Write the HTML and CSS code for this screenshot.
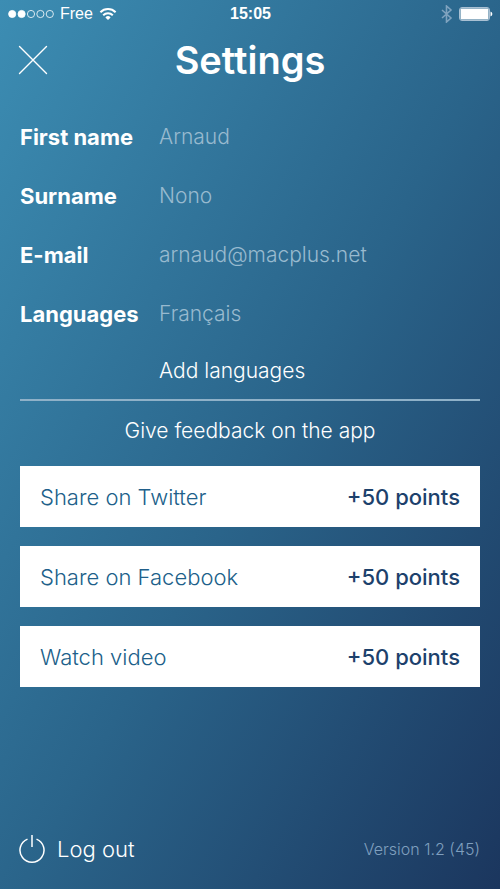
FILE: index.html
```html
<!DOCTYPE html>
<html lang="en">
<head>
<meta charset="utf-8">
<meta name="viewport" content="width=device-width, initial-scale=1">
<title>Settings</title>
<link rel="stylesheet" href="styles.css">
</head>
<body>
<div class="status">
  <div class="carrier">
    <svg class="signal" width="46" height="10" viewBox="0 0 46 10" fill="none" stroke="#fff" stroke-width="0.8" aria-hidden="true">
      <circle cx="4.2" cy="5" r="3.6" fill="#fff"/><circle cx="13.6" cy="5" r="3.6" fill="#fff"/>
      <circle cx="23" cy="5" r="3.6"/><circle cx="32.4" cy="5" r="3.6"/><circle cx="41.8" cy="5" r="3.6"/>
    </svg>
    <span>Free</span>
    <svg width="18" height="14" viewBox="0 0 18 14" fill="none" stroke="#fff" stroke-width="2" aria-hidden="true">
      <path d="M1.4 5.2a10.8 10.8 0 0 1 15.2 0M4.2 8.2a6.8 6.8 0 0 1 9.6 0"/>
      <path d="M6.4 10.4a3.7 3.7 0 0 1 5.2 0L9 13z" fill="#fff" stroke="none"/>
    </svg>
  </div>
  <time class="time">15:05</time>
  <div class="power">
    <svg width="12" height="18" viewBox="0 0 12 18" fill="none" stroke="#7fa3bf" stroke-width="1.6" aria-hidden="true">
      <path d="M1 5l9 8-4.500 4V1L10 5l-9 8"/>
    </svg>
    <svg width="34" height="14" viewBox="0 0 34 14" aria-hidden="true">
      <rect x="0.500" y="0.500" width="30" height="13" rx="2.500" fill="none" stroke="#a9c0d3"/>
      <rect x="1.500" y="1.500" width="28" height="11" rx="1" fill="#fff"/>
      <path d="M31.500 4.500a2.600 2.600 0 0 1 0 5z" fill="#fff"/>
    </svg>
  </div>
</div>
<header class="header">
  <button class="close" type="button" aria-label="Close">
    <svg width="30" height="30" viewBox="0 0 30 30" stroke="#fff" stroke-width="1.4" stroke-linecap="round"><path d="M1.500 1.500l27 27M28.500 1.500l-27 27"/></svg>
  </button>
  <h1 class="title">Settings</h1>
</header>
<main class="main">
  <form class="profile">
    <div class="field"><label for="first">First name</label><input id="first" type="text" value="Arnaud"></div>
    <div class="field"><label for="last">Surname</label><input id="last" type="text" value="Nono"></div>
    <div class="field"><label for="email">E-mail</label><input id="email" type="email" value="arnaud@macplus.net"></div>
    <div class="field"><label for="langs">Languages</label><input id="langs" type="text" value="Français"></div>
    <div class="field add"><button class="plain" type="button">Add languages</button></div>
  </form>
  <button class="plain feedback" type="button">Give feedback on the app</button>
  <div class="offers">
    <button class="offer" type="button"><span>Share on Twitter</span><strong>+50 points</strong></button>
    <button class="offer" type="button"><span>Share on Facebook</span><strong>+50 points</strong></button>
    <button class="offer" type="button"><span>Watch video</span><strong>+50 points</strong></button>
  </div>
</main>
<footer class="footer">
  <button class="logout" type="button">
    <svg width="26" height="30" viewBox="0 0 26 30" fill="none" stroke="#fff" stroke-width="1.500" aria-hidden="true"><path d="M13 1v12M8.500 5.100a12 12 0 1 0 9 0"/></svg>
    <span>Log out</span>
  </button>
  <span class="version">Version 1.2 (45)</span>
</footer>
</body>
</html>
```

FILE: styles.css
```css
* {
  box-sizing: border-box;
}

body {
  margin: 0;
  min-height: 100vh;
  display: flex;
  flex-direction: column;
  background: linear-gradient(to bottom right, #3c8db3, #2a648a 52%, #1b365e);
  color: #fff;
  font-family: Inter, "Liberation Sans", sans-serif;
  font-size: 22px;
  font-weight: 300;
  line-height: 28px;
}

button,
input {
  font: inherit;
  color: inherit;
  background: none;
  border: 0;
  padding: 0;
  margin: 0;
}

button {
  cursor: pointer;
}

svg {
  display: block;
}

.status {
  display: grid;
  grid-template-columns: 1fr auto 1fr;
  align-items: center;
  height: 28px;
  padding: 0 7px 0 8px;
  font-family: "Liberation Sans", sans-serif;
  font-size: 16px;
  font-weight: 400;
}

.carrier,
.power {
  display: flex;
  align-items: center;
  gap: 6px;
}

.power {
  justify-content: flex-end;
}

.time {
  font-weight: 700;
}

.header {
  display: grid;
  grid-template-columns: 30px 1fr 30px;
  align-items: center;
  height: 64px;
  padding: 0 18px;
}

.title {
  margin: 0;
  text-align: center;
  font-size: 38px;
  font-weight: 600;
  line-height: 48px;
}

.main {
  padding: 15px 20px 0;
}

.profile {
  padding-bottom: 1px;
  border-bottom: 2px solid #8fb1c8;
}

.field {
  display: grid;
  grid-template-columns: 139px 1fr;
  align-items: center;
  height: 59px;
}

.field label {
  font-weight: 700;
}

.field input {
  width: 100%;
  color: #98bacf;
  font-size: 21px;
}

.add {
  height: 55px;
}

.plain {
  font-size: 21px;
}

.add .plain {
  grid-column: 2;
  justify-self: start;
}

.feedback {
  display: block;
  margin: 16px auto 21px;
}

.offers {
  display: grid;
  gap: 19px;
}

.offer {
  display: flex;
  justify-content: space-between;
  align-items: center;
  height: 61px;
  padding: 0 20px;
  background: #fff;
  color: #205f8a;
}

.offer strong {
  color: #1d416c;
  font-weight: 500;
}

.footer {
  display: flex;
  justify-content: space-between;
  align-items: center;
  margin-top: auto;
  padding: 20px 20px 25px 19px;
}

.logout {
  display: flex;
  align-items: center;
  gap: 12px;
}

.version {
  color: #7f9fbe;
  font-size: 16px;
}
```
